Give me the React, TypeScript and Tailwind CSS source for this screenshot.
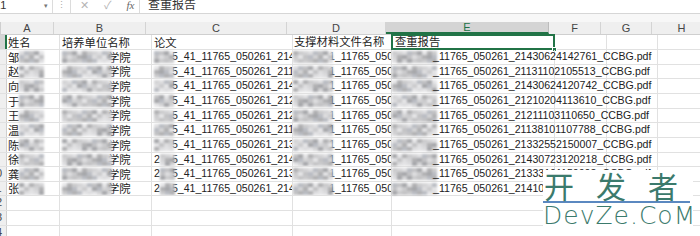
import React from "react";

// column widths (px), border included
const cols = [
    { key: "A", w: 53 },
    { key: "B", w: 92 },
    { key: "C", w: 141 },
    { key: "D", w: 99 },
    { key: "E", w: 163 },
    { key: "F", w: 52 },
    { key: "G", w: 51 },
    { key: "H", w: 60 },
];

const rowHeights = [15, 15, 14, 15, 15, 14, 15, 15, 14, 15, 14, 15, 15, 15];

const rows = [
    { name: "邹", c: "5_41_11765_050261_2142420", c2: false, e: "21430624142761" },
    { name: "赵", c: "5_41_11765_050261_2113110", c2: false, e: "21131102105513" },
    { name: "向", c: "5_41_11765_050261_2143062", c2: false, e: "21430624120742" },
    { name: "于", c: "5_41_11765_050261_2122102", c2: false, e: "21210204113610" },
    { name: "王", c: "5_41_11765_050261_2122110", c2: false, e: "21211103110650" },
    { name: "温", c: "5_41_11765_050261_2112410", c2: false, e: "21138101107788" },
    { name: "陈", c: "5_41_11765_050261_2132425", c2: false, e: "21332552150007" },
    { name: "徐", c: "5_41_11765_050261_2142420", c2: true, e: "21430723120218" },
    { name: "龚", c: "5_41_11765_050261_2132420", c2: true, e: "21333101150003" },
    { name: "张", c: "5_41_11765_050261_2142420", c2: true, e: "21410612120531" },
];

const shades = ["#a9a9ab", "#bdbdbf", "#cfcfd1", "#e2e2e4", "#b3b6bd", "#c6c6c8", "#9d9ea2", "#dadadc"];

function Mosaic({ w, seed, light = false }: { w: number; seed: number; light?: boolean }) {
    const n = Math.ceil(w / 5);
    const cells: string[] = [];
    for (let r = 0; r < 3; r++) {
        for (let i = 0; i < n; i++) {
            const k = (seed * 7 + i * 13 + r * 5 + ((i * r) % 3)) % shades.length;
            cells.push(light ? shades[(k + 2) % shades.length] : shades[k]);
        }
    }
    return (
        <span
            className="inline-grid shrink-0 blur-[0.8px] opacity-90"
            style={{ width: w, gridTemplateColumns: `repeat(${n}, 5px)`, gridAutoRows: "4px" }}
        >
            {cells.map((c, i) => (
                <span key={i} style={{ background: c }} />
            ))}
        </span>
    );
}

const cn = (...c: string[]) => c.join(" ");

function Zh({ children }: { children: React.ReactNode }) {
    return <span className="text-[11.3px] font-['Noto_Sans_CJK_SC',sans-serif]">{children}</span>;
}

export default function App() {
    return (
        <div className="relative w-[700px] h-[236px] overflow-hidden bg-white font-['Liberation_Sans','Noto_Sans_CJK_SC',sans-serif] text-[10.6px] text-[#222]">
            {/* formula bar */}
            <div className="flex h-[14px] border-b border-[#d6d6d6] bg-white">
                <div className="relative flex w-[53px] items-start overflow-hidden border-r border-[#dcdcdc] text-[11px] leading-[10px] text-[#333]">
                    <span className="-ml-[7px]">E1</span>
                    <span className="absolute left-[44px] top-[1px] text-[7px] text-[#777]">▾</span>
                </div>
                <div className="flex w-[17px] justify-center text-[9px] leading-[10px] text-[#aaa]">⋮</div>
                <div className="flex w-[70px] items-start gap-[15px] border-x border-[#dcdcdc] pl-[9px] text-[11px] leading-[10px] text-[#b5b5b5]">
                    <span>✕</span>
                    <span>✓</span>
                    <span className="font-['Liberation_Serif',serif] italic text-[#666]">fx</span>
                </div>
                <div className="flex flex-1 items-start pl-[8px]">
                    <span className="-mt-[3px] text-[12px] leading-[14px] text-[#333] font-['Noto_Sans_CJK_SC',sans-serif]">
                        查重报告
                    </span>
                </div>
            </div>
            <div className="h-[8px] bg-[#f7f7f7]" />

            {/* column headers */}
            <div className="flex h-[13px] border-b border-[#cfcfcf] bg-[#efefef] text-[11px] text-[#444]">
                <div className="relative w-[7px] border-r border-[#cfcfcf]">
                    <span className="absolute bottom-[1px] right-[1px] h-0 w-0 border-b-[6px] border-l-[6px] border-b-[#b4b4b4] border-l-transparent" />
                </div>
                {cols.map((c) => (
                    <div
                        key={c.key}
                        className={cn(
                            "flex shrink-0 items-center justify-center border-r leading-none",
                            c.key === "E" ? "bg-[#d4d4d4] border-[#bcbcbc] border-b-2 border-b-[#217346] text-[#217346]" : "border-[#d4d4d4]"
                        )}
                        style={{ width: c.w }}
                    >
                        {c.key}
                    </div>
                ))}
            </div>

            {/* grid rows */}
            {rowHeights.map((h, ri) => {
                const d = ri >= 1 && ri <= 10 ? rows[ri - 1] : null;
                return (
                    <div key={ri} className="flex border-b border-[#e1e1e1]" style={{ height: h }}>
                        <div
                            className={cn(
                                "w-[7px] shrink-0 overflow-hidden border-r",
                                ri === 0 ? "bg-[#d4d4d4] border-r-2 border-[#217346]" : "bg-[#efefef] border-[#cfcfcf]"
                            )}
                        >
                            <div className="-ml-[14px] w-[20px] text-center text-[11px] leading-[13px] text-[#444]">{ri + 1}</div>
                        </div>

                        {/* A */}
                        <div className="flex w-[53px] shrink-0 items-center overflow-hidden border-r border-[#e1e1e1] pl-[1px]">
                            {ri === 0 && <Zh>姓名</Zh>}
                            {d && (
                                <>
                                    <Zh>{d.name}</Zh>
                                    <Mosaic w={25} seed={ri} />
                                </>
                            )}
                        </div>

                        {/* B */}
                        <div className="flex w-[92px] shrink-0 items-center overflow-hidden border-r border-[#e1e1e1] pl-[2px]">
                            {ri === 0 && <Zh>培养单位名称</Zh>}
                            {d && (
                                <>
                                    <Mosaic w={46} seed={ri + 3} />
                                    <Zh>学院</Zh>
                                </>
                            )}
                        </div>

                        {/* C */}
                        <div className="flex w-[141px] shrink-0 items-center overflow-hidden whitespace-nowrap border-r border-[#e1e1e1] pl-[2px]">
                            {ri === 0 && <Zh>论文</Zh>}
                            {d && (
                                <>
                                    {d.c2 && <span>2</span>}
                                    <Mosaic w={d.c2 ? 12 : 18} seed={ri + 5} light />
                                    <span>{d.c}</span>
                                </>
                            )}
                        </div>

                        {/* D */}
                        <div className="flex w-[99px] shrink-0 items-center overflow-hidden whitespace-nowrap border-r border-[#e1e1e1]">
                            {ri === 0 && (
                                <span className="pl-[1px]">
                                    <Zh>支撑材料文件名称</Zh>
                                </span>
                            )}
                            {d && (
                                <>
                                    <Mosaic w={36} seed={ri + 1} light />
                                    <span>1_11765_050261_2</span>
                                </>
                            )}
                        </div>

                        {/* E */}
                        <div className="relative flex w-[163px] shrink-0 items-center whitespace-nowrap border-r border-[#e1e1e1]">
                            {ri === 0 && (
                                <>
                                    <span className="pl-[3px]">
                                        <Zh>查重报告</Zh>
                                    </span>
                                    <span className="absolute -left-[1px] -top-[1px] -bottom-[1px] -right-[1px] border-2 border-[#217346]" />
                                    <span className="absolute -bottom-[3px] -right-[3px] h-[5px] w-[5px] border border-white bg-[#217346]" />
                                </>
                            )}
                            {d && (
                                <>
                                    <Mosaic w={41} seed={ri + 2} />
                                    <span className="relative z-10">_11765_050261_{d.e}_CCBG.pdf</span>
                                </>
                            )}
                        </div>

                        <div className="w-[52px] shrink-0 border-r border-[#e1e1e1]" />
                        <div className="w-[51px] shrink-0 border-r border-[#e1e1e1]" />
                        <div className="w-[60px] shrink-0 border-r border-[#e1e1e1]" />
                    </div>
                );
            })}

            {/* site watermark */}
            <div className="absolute left-[543px] top-[170px] z-20 h-[66px] w-[150px] bg-white">
                <p className="block h-[30px] whitespace-nowrap pl-[1px] text-[30px] leading-[30px] tracking-[22px] text-[#3b7a6c] font-['Noto_Sans_CJK_SC',sans-serif]">
                    开发者
                </p>
                <div className="mt-[1px] h-[1.5px] w-[147px] bg-[#5b88c0]" />
                <p className="block h-[26px] whitespace-nowrap text-[25px] leading-[26px] tracking-[1px] text-[#3b7a6c] font-['DejaVu_Sans',sans-serif] font-light">
                    DevZe.CoM
                </p>
            </div>
        </div>
    );
}
